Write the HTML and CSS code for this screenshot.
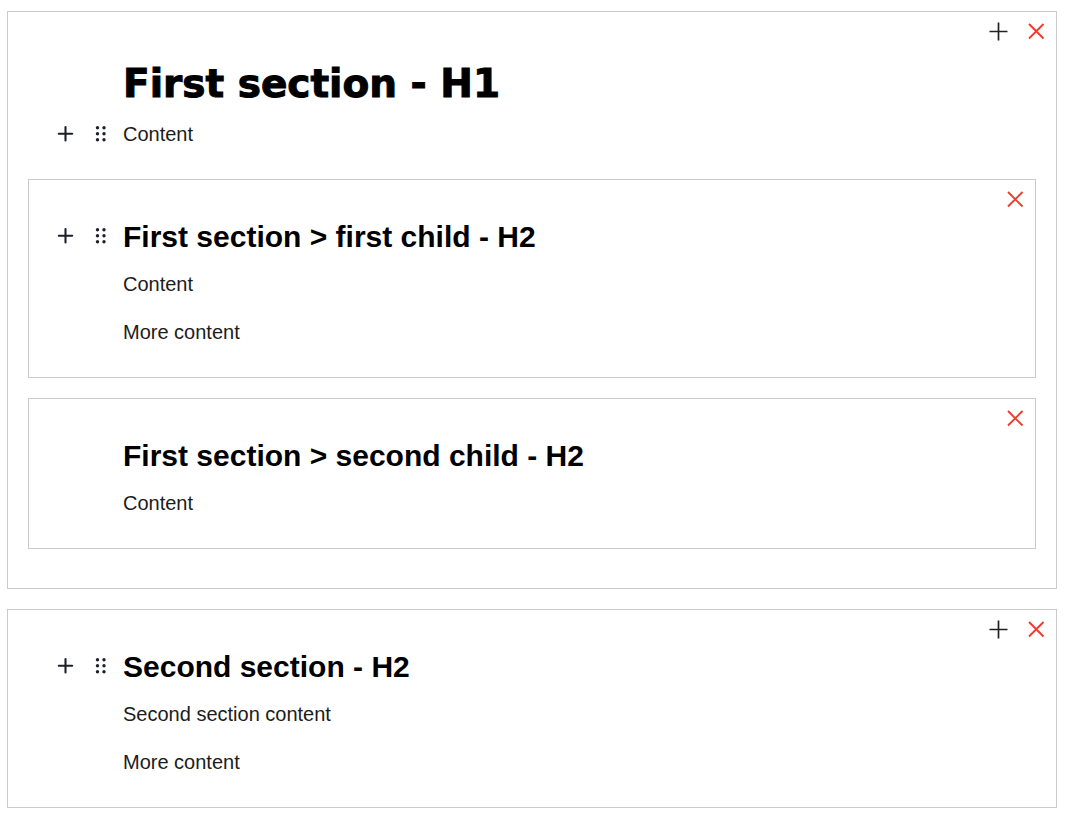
FILE: index.html
```
<!DOCTYPE html>
<html lang="en">
<head>
<meta charset="utf-8">
<title>Section editor</title>
<link rel="stylesheet" href="styles.css">
</head>
<body>
<svg class="symbols" aria-hidden="true">
  <symbol id="add" viewBox="0 0 20 20"><path d="M10.500 1.500v18M1.500 10.500h18" fill="none" stroke="#222" stroke-width="1.700"/></symbol>
  <symbol id="remove" viewBox="0 0 20 20"><path d="M3 3l14.500 14.500M17.500 3L3 17.500" fill="none" stroke="#f03a2b" stroke-width="1.900"/></symbol>
  <symbol id="plus" viewBox="0 0 20 20"><path d="M9.500 3v13.500M2.800 9.800h13.400" fill="none" stroke="#1d202b" stroke-width="2.100" stroke-linecap="round"/></symbol>
  <symbol id="grip" viewBox="0 0 20 20"><g fill="#1d202b"><circle cx="6.500" cy="3.800" r="1.700"/><circle cx="13" cy="3.800" r="1.700"/><circle cx="6.500" cy="9.800" r="1.700"/><circle cx="13" cy="9.800" r="1.700"/><circle cx="6.500" cy="15.800" r="1.700"/><circle cx="13" cy="15.800" r="1.700"/></g></symbol>
</svg>
<main class="editor">
  <section class="card card-parent">
    <div class="actions">
      <button class="icon" aria-label="Add child section"><svg><use href="#add"/></svg></button>
      <button class="icon" aria-label="Remove section"><svg><use href="#remove"/></svg></button>
    </div>
    <div class="row row-title"><h1>First section - H1</h1></div>
    <div class="row">
      <div class="tools">
        <button class="icon" aria-label="Add block"><svg><use href="#plus"/></svg></button>
        <button class="icon" aria-label="Move block"><svg><use href="#grip"/></svg></button>
      </div>
      <p>Content</p>
    </div>
    <div class="children">
      <section class="card card-child">
        <div class="actions">
          <button class="icon" aria-label="Remove section"><svg><use href="#remove"/></svg></button>
        </div>
        <div class="row row-heading">
          <div class="tools">
            <button class="icon" aria-label="Add block"><svg><use href="#plus"/></svg></button>
            <button class="icon" aria-label="Move block"><svg><use href="#grip"/></svg></button>
          </div>
          <h2>First section &gt; first child - H2</h2>
        </div>
        <div class="row"><p>Content</p></div>
        <div class="row"><p>More content</p></div>
      </section>
      <section class="card card-child">
        <div class="actions">
          <button class="icon" aria-label="Remove section"><svg><use href="#remove"/></svg></button>
        </div>
        <div class="row row-heading"><h2>First section &gt; second child - H2</h2></div>
        <div class="row"><p>Content</p></div>
      </section>
    </div>
  </section>
  <section class="card">
    <div class="actions">
      <button class="icon" aria-label="Add child section"><svg><use href="#add"/></svg></button>
      <button class="icon" aria-label="Remove section"><svg><use href="#remove"/></svg></button>
    </div>
    <div class="row row-heading">
      <div class="tools">
        <button class="icon" aria-label="Add block"><svg><use href="#plus"/></svg></button>
        <button class="icon" aria-label="Move block"><svg><use href="#grip"/></svg></button>
      </div>
      <h2>Second section - H2</h2>
    </div>
    <div class="row"><p>Second section content</p></div>
    <div class="row"><p>More content</p></div>
  </section>
</main>
</body>
</html>
```
FILE: styles.css
```
* {
  box-sizing: border-box;
}

body {
  margin: 0;
  background: #fff;
  color: #1c1c1c;
  font: 20px/28px "Liberation Sans", Arial, sans-serif;
}

.symbols {
  display: none;
}

.editor {
  display: flex;
  flex-direction: column;
  gap: 20px;
  padding: 11px 9px 11px 7px;
}

.card {
  --gutter: 115px;
  border: 1px solid #cacaca;
  padding-bottom: 21px;
}

.card-parent {
  padding-bottom: 39px;
}

.card-child {
  --gutter: 94px;
}

.children {
  display: flex;
  flex-direction: column;
  gap: 20px;
  padding: 21px 20px 0;
}

.actions {
  display: flex;
  justify-content: flex-end;
  gap: 18px;
  height: 31px;
  padding: 9px 10px 0;
}

.icon {
  display: block;
  width: 20px;
  height: 20px;
  padding: 0;
  border: 0;
  background: none;
  cursor: pointer;
}

.icon svg {
  display: block;
  width: 20px;
  height: 20px;
}

.row {
  display: grid;
  grid-template-columns: var(--gutter) 1fr;
  align-items: center;
  min-height: 48px;
}

.row-title {
  min-height: 52px;
  margin-top: 15px;
}

.row-heading {
  min-height: 49px;
}

.tools {
  display: flex;
  justify-content: flex-end;
  gap: 15px;
  padding-right: 12px;
}

h1,
h2,
p {
  grid-column: 2;
  margin: 0;
}

h1,
h2 {
  color: #000;
}

h1 {
  font: 900 39px/52px "Arial Black", "DejaVu Sans", sans-serif;
  -webkit-text-stroke: 1px #000;
}

h2 {
  padding-top: 2px;
  font-size: 30px;
  line-height: 36px;
}
```
